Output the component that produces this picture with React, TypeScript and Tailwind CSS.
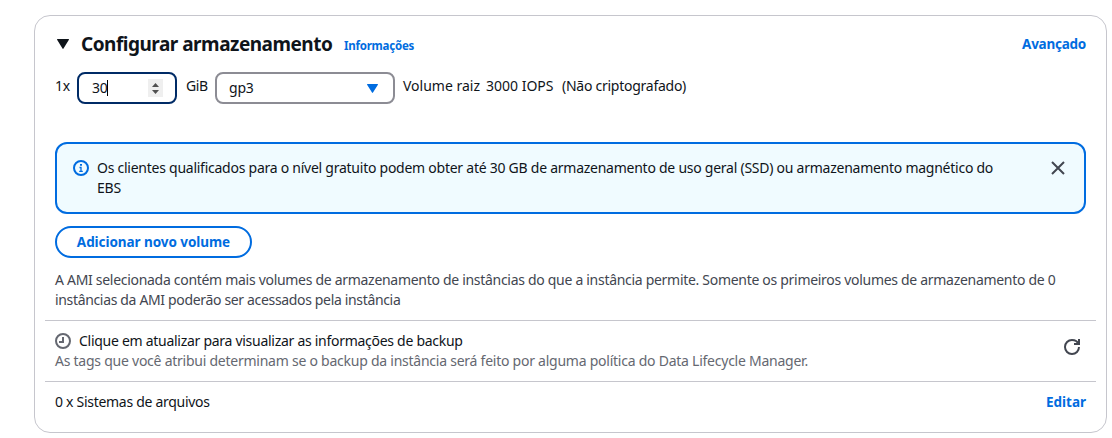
const link = 'font-bold text-[#006ce0]';

function InfoIcon() {
  return (
    <svg className="mt-[2px] h-4 w-4 shrink-0 text-[#006ce0]" viewBox="0 0 16 16" fill="none" stroke="currentColor" strokeWidth="2">
      <circle cx="8" cy="8" r="7" />
      <path d="M6.5 7.5H8V11M6.2 11.4h3.6" strokeWidth="1.3" />
      <path d="M7 4h2v1.7H7z" fill="currentColor" stroke="none" />
    </svg>
  );
}

function ClockIcon() {
  return (
    <svg className="h-4 w-4 shrink-0 text-[#656871]" viewBox="0 0 16 16" fill="none" stroke="currentColor" strokeWidth="2">
      <circle cx="8" cy="8" r="7" />
      <path d="M8 4v5H4" />
    </svg>
  );
}

function RefreshIcon() {
  return (
    <svg className="mb-2 h-4 w-4 text-[#424650]" viewBox="0 0 16 16" fill="none" stroke="currentColor" strokeWidth="2">
      <path d="M10 5h5V0" />
      <path d="M15 8a6.96 6.96 0 0 1-7 7 6.96 6.96 0 0 1-7-7 6.96 6.96 0 0 1 7-7c3 0 5.5 1.5 6.5 4" />
    </svg>
  );
}

export default function App() {
  return (
    <div className="h-[438px] bg-white pt-[15px] pr-[5px] pl-[34px] font-['Noto_Sans','Open_Sans',sans-serif] text-sm leading-5 whitespace-nowrap text-[#0f141a]">
      <section className="flex h-[418px] flex-col rounded-2xl border border-[#c6c6cd] px-[10px]">
        <header className="flex h-14 items-center px-[10px]">
          <svg className="mr-3 ml-[2px] h-[10px] w-3" viewBox="0 0 12 10" fill="currentColor">
            <path d="M.5 0h11a.5.5 0 0 1 .4.8L6.5 9.6a.6.6 0 0 1-1 0L.1.8A.5.5 0 0 1 .5 0Z" />
          </svg>
          <h2 className="mb-px w-[252px] text-[19px] leading-6 font-bold tracking-[-0.5px]">Configurar armazenamento</h2>
          <a className={`${link} mt-1 ml-[11px] text-[11.5px] tracking-[-0.23px]`}>Informações</a>
          <a className={`${link} ml-auto text-[13.5px] tracking-[-0.25px]`}>Avançado</a>
        </header>

        <div className="flex h-8 px-[10px]">
          <span className="w-[22px] pt-1 tracking-[-0.3px]">1x</span>
          <div className="flex h-8 w-[100px] items-center rounded-lg border-2 border-[#002b66] pr-[12px] pl-[13px]">
            <span className="tracking-[-0.2px]">30</span>
            <span className="-ml-px h-4 w-px bg-black" />
            <span className="ml-auto flex h-[18px] w-[15px] flex-col items-center justify-center gap-[3px] bg-[#efefef] text-[#505050]">
              <svg className="h-1 w-[7px]" viewBox="0 0 7 4" fill="currentColor"><path d="M3.5 0 7 4H0z" /></svg>
              <svg className="h-1 w-[7px]" viewBox="0 0 7 4" fill="currentColor"><path d="M0 0h7L3.5 4z" /></svg>
            </span>
          </div>
          <span className="ml-[9px] w-[29px] pt-1 tracking-[-0.4px]">GiB</span>
          <div className="flex h-8 w-[180px] items-center justify-between rounded-lg border-2 border-[#8c8c94] pr-[15px] pl-3">
            <span className="tracking-[-0.2px]">gp3</span>
            <svg className="h-[9px] w-[11px] text-[#006ce0]" viewBox="0 0 11 9" fill="currentColor">
              <path d="M.5 0h10a.5.5 0 0 1 .4.8L6 8.6a.6.6 0 0 1-1 0L.1.8A.5.5 0 0 1 .5 0Z" />
            </svg>
          </div>
          <span className="ml-2 w-[83px] pt-1">Volume raiz</span>
          <span className="w-[76px] pt-1">3000 IOPS</span>
          <span className="pt-1 tracking-[-0.26px]">(Não criptografado)</span>
        </div>

        <div className="mx-[10px] mt-[38px] flex h-[72px] shrink-0 rounded-xl border-2 border-[#006ce0] bg-[#f0fbff] pt-[14px] pr-[19px] pl-4">
          <InfoIcon />
          <p className="ml-2">
            <span className="tracking-[-0.252px]">Os clientes qualificados para o nível gratuito podem obter até 30 GB de armazenamento de uso geral (SSD) ou armazenamento magnético do</span><br />
            <span className="tracking-[-0.25px]">EBS</span>
          </p>
          <svg className="mt-[3px] ml-auto h-[14px] w-[14px] text-[#424650]" viewBox="0 0 14 14" fill="none" stroke="currentColor" strokeWidth="2">
            <path d="m1 1 12 12M13 1 1 13" />
          </svg>
        </div>

        <button className={`${link} mx-[10px] mt-3 flex h-8 w-[197px] shrink-0 items-center justify-center self-start rounded-full border-2 border-[#006ce0] text-[13.5px] tracking-[-0.06px]`}>
          Adicionar novo volume
        </button>

        <p className="mt-3 ml-[10px] text-[#424650]">
          <span className="tracking-[-0.297px]">A AMI selecionada contém mais volumes de armazenamento de instâncias do que a instância permite. Somente os primeiros volumes de armazenamento de 0</span><br />
          <span className="tracking-[-0.34px]">instâncias da AMI poderão ser acessados pela instância</span>
        </p>

        <div className="mt-[10px] flex h-[61px] shrink-0 items-center justify-between border-t border-[#c6c6cd] pr-4 pl-[10px]">
          <div>
            <div className="flex items-center gap-2 tracking-[-0.28px]"><ClockIcon />Clique em atualizar para visualizar as informações de backup</div>
            <div className="tracking-[-0.245px] text-[#656871]">As tags que você atribui determinam se o backup da instância será feito por alguma política do Data Lifecycle Manager.</div>
          </div>
          <RefreshIcon />
        </div>

        <footer className="flex h-[41px] items-center justify-between border-t border-[#c6c6cd] px-[10px]">
          <span className="tracking-[-0.29px]">0 x Sistemas de arquivos</span>
          <a className={`${link} text-[13.5px]`}>Editar</a>
        </footer>
      </section>
    </div>
  );
}
